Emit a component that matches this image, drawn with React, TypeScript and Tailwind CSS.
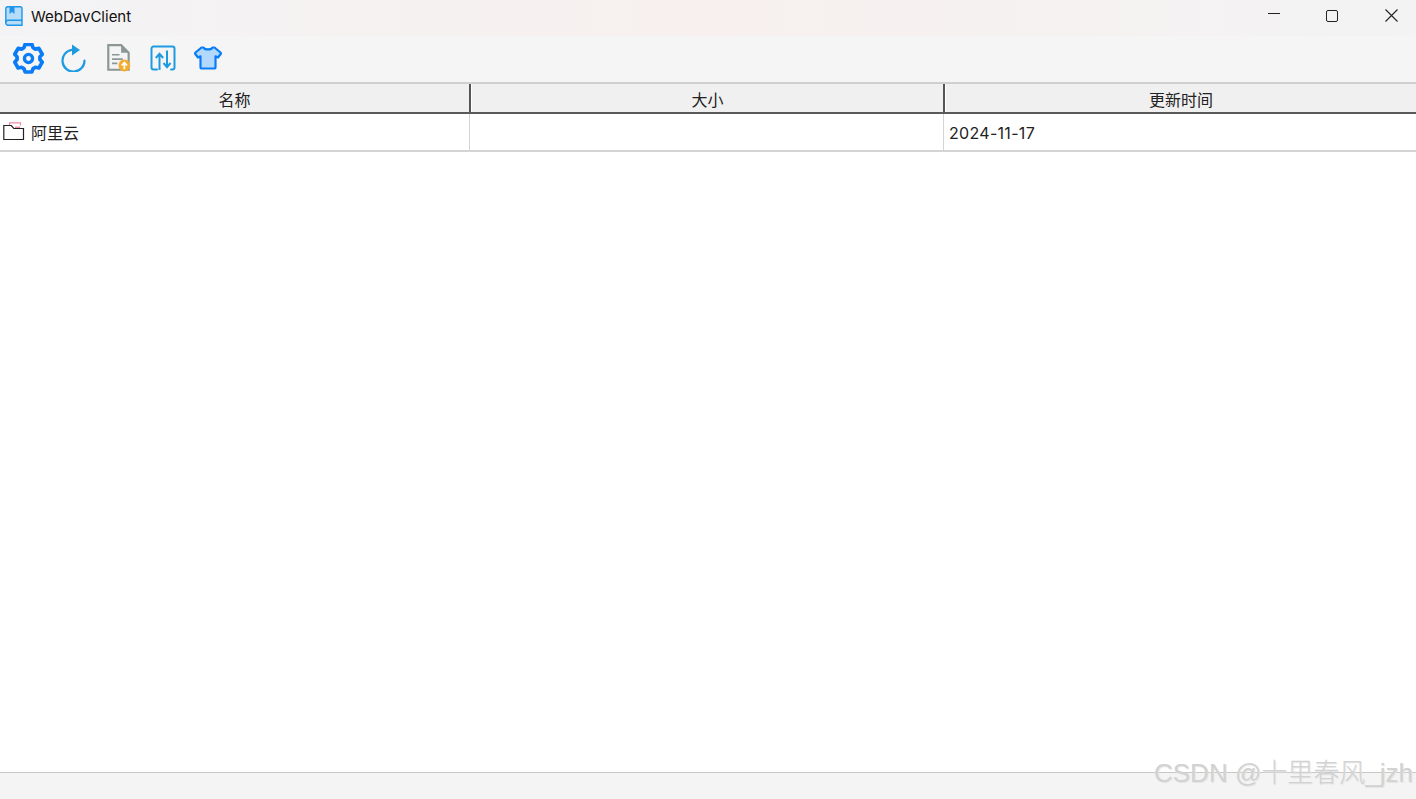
const F = 'Inter, "Noto Sans CJK SC", "Liberation Sans", sans-serif';

function Gear() {
  return (
    <svg width="31" height="31" viewBox="0 0 32 32" fill="none">
      <path d="M12.500 3.500h7l1.200 3.400 2.400 1.400 3.600-.7 3.500 6-2.400 2.700v2.800l2.400 2.700-3.500 6-3.600-.7-2.400 1.400-1.200 3.400h-7l-1.200-3.400-2.400-1.400-3.600.7-3.500-6 2.400-2.700v-2.800l-2.400-2.700 3.500-6 3.600.7 2.400-1.400z" transform="translate(0 -2)" stroke="#0a7cf5" strokeWidth="3.800" strokeLinejoin="round" />
      <circle cx="16" cy="16" r="4.200" stroke="#0a7cf5" strokeWidth="3.400" />
    </svg>
  );
}
function Refresh() {
  return (
    <svg width="26" height="28" viewBox="0 0 26 28" fill="none">
      <path d="M11.500 5.800A11 11 0 1 0 24.500 16.500" stroke="#1e9be0" strokeWidth="2.200" strokeLinecap="round" />
      <path d="M12 .5l8 5.500-8 5.500z" fill="#1e9be0" />
    </svg>
  );
}
function Doc() {
  return (
    <svg width="26" height="30" viewBox="0 0 24 28" fill="none">
      <path d="M2 2h12l7 7v16H2z" stroke="#8b9795" strokeWidth="2" fill="#f4f4f5" />
      <path d="M14 2v7h7z" fill="#8b9795" />
      <path d="M5.500 11h7M5.500 15h10M5.500 19h5" stroke="#8b9795" strokeWidth="1.500" />
      <circle cx="17" cy="21" r="5.500" fill="#f2ad2e" />
      <path d="M17 24.500v-5M14.500 21l2.500-2.800 2.500 2.800" stroke="#fff" strokeWidth="1.600" />
    </svg>
  );
}
function Transfer() {
  return (
    <svg width="28" height="28" viewBox="0 0 28 28" fill="none">
      <path d="M8 25.500H4.500a2 2 0 0 1-2-2v-19a2 2 0 0 1 2-2h19a2 2 0 0 1 2 2v19a2 2 0 0 1-2 2H22" stroke="#1e9be0" strokeWidth="2" strokeLinecap="round" />
      <path d="M10.500 26V10M6.800 14l3.700-4.200 3.700 4.200M18 6.500V23M14.500 19l3.500 4.200 3.500-4.200" stroke="#1e9be0" strokeWidth="2" />
    </svg>
  );
}
function Shirt() {
  return (
    <svg width="28" height="26" viewBox="0 0 28 26" fill="none">
      <path d="M9.500 2.500c1 2.500 8 2.500 9 0l2 0 6 5c.5.500.5 1 .2 1.500l-2.700 3.500-2.500-1.200V22a1.500 1.500 0 0 1-1.500 1.500H8A1.500 1.500 0 0 1 6.500 22V11.300L4 12.500 1.300 9c-.3-.5-.3-1 .2-1.500l6-5z" fill="#b3d8fd" stroke="#0a7cf5" strokeWidth="2.200" strokeLinejoin="round" />
    </svg>
  );
}
function Book() {
  return (
    <svg width="18" height="20" viewBox="0 0 18 20" fill="none">
      <path d="M3 .8h12.500a1.500 1.500 0 0 1 1.500 1.500v16.900H3a2.200 2.200 0 0 1-2.200-2.200V3A2.200 2.200 0 0 1 3 .8z" fill="#b5dcf8" stroke="#2196e8" strokeWidth="1.400" />
      <path d="M.8 16.500a2.200 2.200 0 0 1 2.200-2.200h14" stroke="#2196e8" strokeWidth="1.400" />
      <path d="M4.500 1h5v7l-2.500-2-2.500 2z" fill="#2196e8" />
    </svg>
  );
}
function Folder() {
  return (
    <svg width="22" height="20" viewBox="0 0 22 20" fill="none">
      <path d="M6.500 3.500V.8h11v2.700" stroke="#f08aa8" strokeWidth="1.200" />
      <path d="M12 5.500h5" stroke="#f08aa8" strokeWidth="2" />
      <path d="M.8 17.500V3.500h7.500l2.500 3h9.700v11z" stroke="#222" strokeWidth="1.200" fill="none" />
    </svg>
  );
}

export default function App() {
  return (
    <div className="relative flex h-[799px] w-[1416px] flex-col overflow-hidden bg-white" style={{ fontFamily: F }}>
      <div className="flex h-[36px] shrink-0 items-center bg-gradient-to-r from-[#f3f3f5] via-[#f7f0ee] to-[#f3f3f4]">
        <div className="ml-[5px] mt-[-4px] flex"><Book /></div>
        <span className="ml-[8px] mt-[-2px] text-[15px] text-[#111]">WebDavClient</span>
        <div className="ml-auto flex h-full items-center">
          <div className="flex w-[48px] justify-center"><div className="mt-[-5px] h-[1px] w-[12px] bg-[#222]" /></div>
          <div className="flex w-[68px] justify-center"><div className="mt-[-5px] h-[12px] w-[12px] rounded-[2px] border border-[#222]" /></div>
          <div className="flex w-[50px] justify-center">
            <svg className="mt-[-5px]" width="13" height="13" viewBox="0 0 13 13" stroke="#222" strokeWidth="1.100"><path d="M.5.500l12 12M12.500.500l-12 12" /></svg>
          </div>
        </div>
      </div>
      <div className="flex h-[46px] shrink-0 items-center bg-[#f5f5f6] pb-[2px] pl-[12px]">
        <div className="flex w-[32px] justify-center"><Gear /></div>
        <div className="ml-[16px] flex w-[26px] justify-center"><Refresh /></div>
        <div className="ml-[20px] flex w-[26px] justify-center"><Doc /></div>
        <div className="ml-[17px] flex w-[28px] justify-center"><Transfer /></div>
        <div className="ml-[17px] flex w-[28px] justify-center"><Shirt /></div>
      </div>
      <div className="flex h-[32px] shrink-0 border-t-2 border-b-2 border-t-[#d0d0d0] border-b-[#595959] bg-[#f0f0f0] text-[16px] text-[#222]">
        <div className="flex w-[471px] items-center justify-center border-r-2 border-r-[#555]"><span className="mt-[3px]">名称</span></div>
        <div className="flex w-[474px] items-center justify-center border-l border-l-white border-r-2 border-r-[#555]"><span className="mt-[3px]">大小</span></div>
        <div className="flex flex-1 items-center justify-center border-l border-l-white"><span className="mt-[3px]">更新时间</span></div>
      </div>
      <div className="flex h-[38px] shrink-0 border-b-2 border-b-[#d4d4d4] text-[16px] text-[#222]">
        <div className="flex w-[470px] items-center border-r border-r-[#d4d4d4] pl-[3px]">
          <div className="mt-[-1px] flex"><Folder /></div>
          <span className="ml-[6px] mt-[2px]">阿里云</span>
        </div>
        <div className="w-[474px] border-r border-r-[#d4d4d4]" />
        <div className="mt-[2px] flex flex-1 items-center pl-[5px] tracking-[0.3px]">2024-11-17</div>
      </div>
      <div className="flex-1" />
      <div className="h-[27px] shrink-0 border-t border-t-[#c8c8c8] bg-[#f4f4f4]" />
      <div className="absolute bottom-[8px] right-[3px] text-[26px] font-light leading-[36px] text-[#d2d2d2]" style={{ fontFamily: '"Liberation Sans", "Noto Sans CJK SC", sans-serif', textShadow: '1px 1px 1px #e4e4e4' }}>CSDN @十里春风_jzh</div>
    </div>
  );
}
